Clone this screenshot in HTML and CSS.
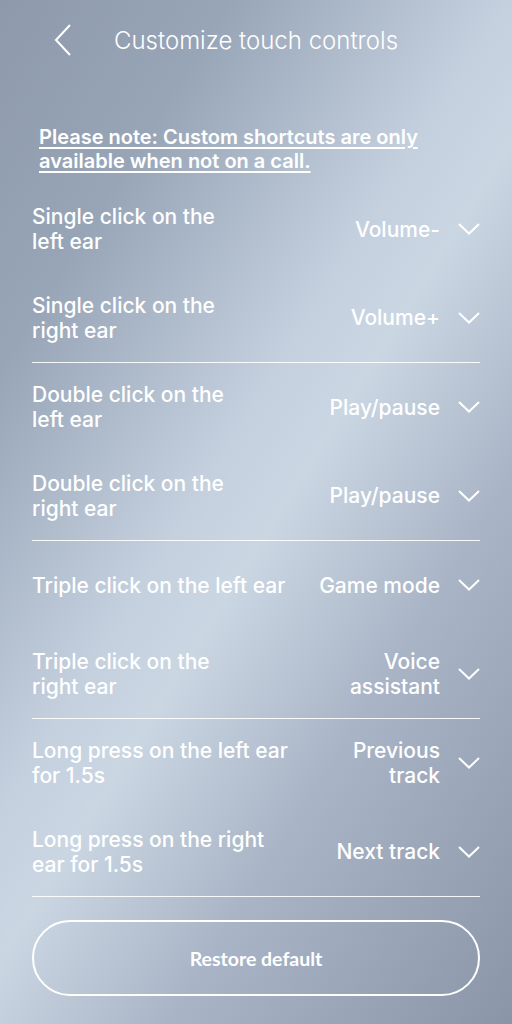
FILE: index.html
```html
<!DOCTYPE html>
<html lang="en">
<head>
    <meta charset="UTF-8">
    <meta name="viewport" content="width=device-width, initial-scale=1.0">
    <title>Customize touch controls</title>
    <link rel="stylesheet" href="styles.css">
</head>
<body>
    <header class="topbar">
        <button class="back" aria-label="Back">
            <svg width="18" height="32" viewBox="0 0 18 32"><path d="M16 1 L2 16 L16 31" fill="none" stroke="#fff" stroke-width="2"/></svg>
        </button>
        <h1>Customize touch controls</h1>
    </header>
    <main>
        <p class="note">Please note: Custom shortcuts are only available when not on a call.</p>

        <div class="group">
            <div class="row">
                <span class="label">Single click on the<br>left ear</span>
                <span class="value">Volume-</span>
                <svg class="chev" width="22" height="12" viewBox="0 0 22 12"><path d="M1 1 L11 10.5 L21 1" fill="none" stroke="#fff" stroke-width="2"/></svg>
            </div>
            <div class="row">
                <span class="label">Single click on the<br>right ear</span>
                <span class="value">Volume+</span>
                <svg class="chev" width="22" height="12" viewBox="0 0 22 12"><path d="M1 1 L11 10.5 L21 1" fill="none" stroke="#fff" stroke-width="2"/></svg>
            </div>
        </div>

        <div class="group">
            <div class="row">
                <span class="label">Double click on the<br>left ear</span>
                <span class="value">Play/pause</span>
                <svg class="chev" width="22" height="12" viewBox="0 0 22 12"><path d="M1 1 L11 10.5 L21 1" fill="none" stroke="#fff" stroke-width="2"/></svg>
            </div>
            <div class="row">
                <span class="label">Double click on the<br>right ear</span>
                <span class="value">Play/pause</span>
                <svg class="chev" width="22" height="12" viewBox="0 0 22 12"><path d="M1 1 L11 10.5 L21 1" fill="none" stroke="#fff" stroke-width="2"/></svg>
            </div>
        </div>

        <div class="group">
            <div class="row">
                <span class="label">Triple click on the left ear</span>
                <span class="value">Game mode</span>
                <svg class="chev" width="22" height="12" viewBox="0 0 22 12"><path d="M1 1 L11 10.5 L21 1" fill="none" stroke="#fff" stroke-width="2"/></svg>
            </div>
            <div class="row">
                <span class="label">Triple click on the<br>right ear</span>
                <span class="value">Voice<br>assistant</span>
                <svg class="chev" width="22" height="12" viewBox="0 0 22 12"><path d="M1 1 L11 10.5 L21 1" fill="none" stroke="#fff" stroke-width="2"/></svg>
            </div>
        </div>

        <div class="group">
            <div class="row">
                <span class="label">Long press on the left ear<br>for 1.5s</span>
                <span class="value">Previous<br>track</span>
                <svg class="chev" width="22" height="12" viewBox="0 0 22 12"><path d="M1 1 L11 10.5 L21 1" fill="none" stroke="#fff" stroke-width="2"/></svg>
            </div>
            <div class="row">
                <span class="label">Long press on the right<br>ear for 1.5s</span>
                <span class="value">Next track</span>
                <svg class="chev" width="22" height="12" viewBox="0 0 22 12"><path d="M1 1 L11 10.5 L21 1" fill="none" stroke="#fff" stroke-width="2"/></svg>
            </div>
        </div>

        <button class="restore">Restore default</button>
    </main>
</body>
</html>
```

FILE: styles.css
```css
html, body {
    height: 100%;
}
body {
    margin: 0;
    padding: 0;
    font-family: Inter, "Noto Sans", sans-serif;
    color: #fff;
    background: linear-gradient(122deg, #8e9aac 0%, #98a5b7 20%, #c4d0de 44%, #cbd6e3 52%, #a9b5c6 70%, #8a96a8 100%);
    overflow: hidden;
}
.topbar {
    display: flex;
    align-items: center;
    height: 80px;
    padding: 0 32px 0 54px;
}
.back {
    background: none;
    border: none;
    padding: 0;
    width: 60px;
    display: flex;
    cursor: pointer;
}
h1 {
    margin: 0;
    font-size: 24px;
    font-weight: 300;
}
main {
    padding: 0 32px;
}
.note {
    margin: 45px 0 0 7px;
    font-size: 20px;
    font-weight: 600;
    line-height: 24px;
    text-decoration: underline;
    text-underline-offset: 3px;
    text-decoration-thickness: 1.5px;
    padding-bottom: 12px;
}
.group {
    border-bottom: 1px solid rgba(255, 255, 255, 0.9);
}
.row {
    height: 88.5px;
    display: flex;
    align-items: center;
}
.label {
    flex: 1;
    font-size: 21px;
    font-weight: 500;
    line-height: 25px;
}
.value {
    text-align: right;
    font-size: 21px;
    font-weight: 500;
    line-height: 25px;
    margin-right: 18px;
}
.chev {
    flex: none;
}
.restore {
    display: block;
    width: 100%;
    height: 76px;
    margin-top: 23px;
    background: none;
    border: 2px solid #fff;
    border-radius: 38px;
    color: #fff;
    font-family: Lato, Inter, sans-serif;
    font-size: 19.5px;
    font-weight: 700;
    cursor: pointer;
}
```
